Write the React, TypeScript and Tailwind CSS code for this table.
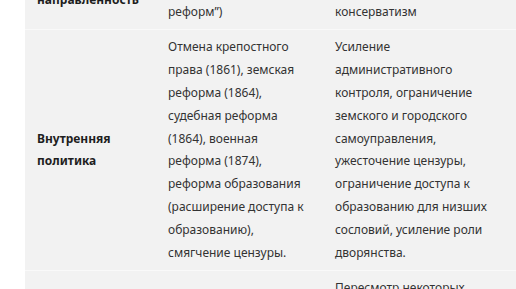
import React from "react";

type Row = { head: string[]; a: string; b: string };

const rows: Row[] = [
  {
    head: ["Политическая", "направленность"],
    a: "Либеральный курс (время “Великих реформ”)",
    b: "Контрреформы, охранительный консерватизм",
  },
  {
    head: ["Внутренняя", "политика"],
    a: "Отмена крепостного права (1861), земская реформа (1864), судебная реформа (1864), военная реформа (1874), реформа образования (расширение доступа к образованию), смягчение цензуры.",
    b: "Усиление административного контроля, ограничение земского и городского самоуправления, ужесточение цензуры, ограничение доступа к образованию для низших сословий, усиление роли дворянства.",
  },
  {
    head: ["Внешняя", "политика"],
    a: "Присоединение Средней Азии, русско-турецкая война (1877–1878).",
    b: "Пересмотр некоторых внешнеполитических решений, сближение с Францией, отказ от активных военных действий, укрепление позиций в Средней Азии и на Дальнем Востоке.",
  },
];

export default function App() {
  return (
    <div className="w-[516px] h-[289px] overflow-hidden bg-white font-['Noto_Sans',sans-serif] text-[12px] leading-[22.8px] text-[#333333]">
      <div className="ml-[25px] -mt-[51px] bg-[#f2f2f2]">
        {rows.map((r, i) => (
          <div
            key={i}
            className="grid grid-cols-[131px_167px_1fr] items-center border-b border-[#f9f9f9]"
          >
            <div className="pl-3 py-[6px] font-bold text-[#1e1e1e]">
              {r.head.map((h) => (
                <div key={h}>{h}</div>
              ))}
            </div>
            <div className="pl-3 py-[6px]">
              <div className="w-[138px]">{r.a}</div>
            </div>
            <div className="pl-3 py-[6px]">
              <div className="w-[152px]">{r.b}</div>
            </div>
          </div>
        ))}
      </div>
    </div>
  );
}
